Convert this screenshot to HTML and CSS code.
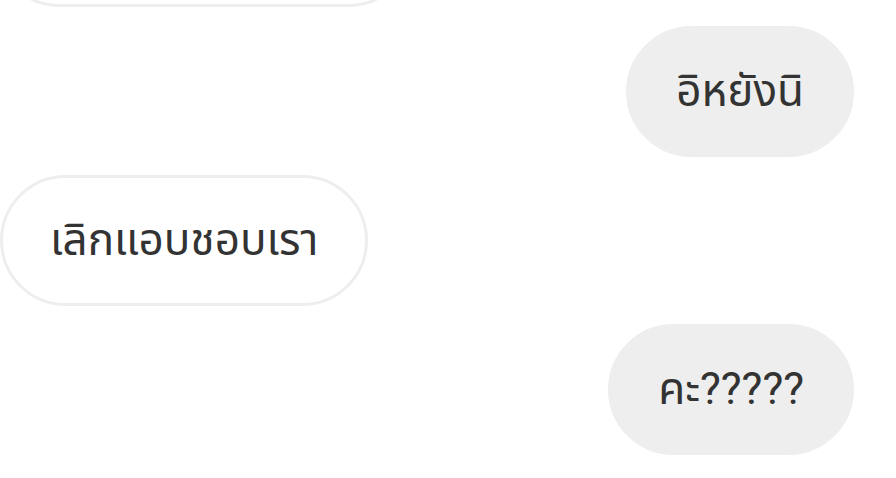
FILE: index.html
```html
<!DOCTYPE html>
<html lang="th">
<head>
    <meta charset="UTF-8">
    <meta name="viewport" content="width=device-width, initial-scale=1.0">
    <title>แชท</title>
    <link rel="stylesheet" href="styles.css">
</head>
<body>

<div class="chat">
    <!-- ข้อความก่อนหน้า ถูกเลื่อนขึ้นไปจนเห็นแค่ขอบล่าง -->
    <div class="message message-in message-first">
        <div class="bubble bubble-cut"></div>
    </div>
    <div class="message message-out">
        <div class="bubble">อิหยังนิ</div>
    </div>
    <div class="message message-in">
        <div class="bubble">เลิกแอบชอบเรา</div>
    </div>
    <div class="message message-out">
        <div class="bubble">คะ?????</div>
    </div>
</div>

</body>
</html>
```

FILE: styles.css
```css
body {
    margin: 0;
    background: #ffffff;
    font-family: Roboto, "Noto Sans", "Noto Sans Thai", sans-serif;
    overflow: hidden;
}

.chat {
    display: flex;
    flex-direction: column;
    gap: 18px;
    padding: 0 42px 0 0;
}

.message {
    display: flex;
}

.message-in {
    justify-content: flex-start;
}

.message-out {
    justify-content: flex-end;
}

.message-first {
    margin-top: -124px;
    margin-bottom: 1px;
}

.bubble {
    padding: 38px 47px;
    line-height: 49px;
    font-size: 44px;
    color: #333333;
    border-radius: 66px;
    border: 3px solid #eeeeee;
    white-space: nowrap;
}

.message-in .bubble {
    background: #ffffff;
}

.message-in .bubble-cut {
    margin-left: -6px;
    width: 320px;
    height: 49px;
}

.message-out .bubble {
    background: #eeeeee;
}
```
